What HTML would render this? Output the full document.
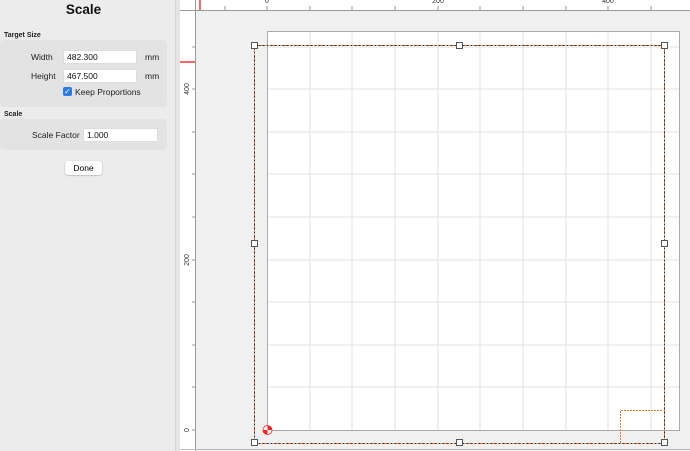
<!DOCTYPE html>
<html><head><style>
body{margin:0;width:690px;height:451px;overflow:hidden;background:#ececec;font-family:"Liberation Sans",sans-serif;position:relative}
.a{position:absolute}
.lbl{font-size:8.5px;color:#222}
.in{background:#fff;border:1px solid #ddd;font-size:8.5px;color:#111;box-sizing:border-box;padding:1px 3px;height:14px}
</style></head><body>
<div class="a" style="left:0;top:0;width:175px;height:451px;background:#ececec"></div>
<div class="a" style="left:0;top:2px;width:167px;text-align:center;font-weight:bold;font-size:13.5px;color:#111">Scale</div>
<div class="a" style="left:4px;top:32px;font-size:7px;font-weight:bold;color:#222">Target Size</div>
<div class="a" style="left:0;top:40px;width:167px;height:67px;background:#e3e3e3;border-radius:4px"></div>
<div class="a lbl" style="left:31px;top:52px">Width</div>
<div class="a in" style="left:63px;top:50px;width:74px">482.300</div>
<div class="a lbl" style="left:145px;top:52px">mm</div>
<div class="a lbl" style="left:31px;top:71px">Height</div>
<div class="a in" style="left:63px;top:69px;width:74px">467.500</div>
<div class="a lbl" style="left:145px;top:71px">mm</div>
<div class="a" style="left:63px;top:87px;width:9px;height:9px;background:#2c7be5;border-radius:2px;color:#fff;font-size:8px;line-height:9px;text-align:center">✓</div>
<div class="a lbl" style="left:75px;top:87px">Keep Proportions</div>
<div class="a" style="left:4px;top:111px;font-size:7px;font-weight:bold;color:#222">Scale</div>
<div class="a" style="left:0;top:119px;width:167px;height:31px;background:#e3e3e3;border-radius:4px"></div>
<div class="a lbl" style="left:32px;top:130px">Scale Factor</div>
<div class="a in" style="left:83px;top:128px;width:75px">1.000</div>
<div class="a" style="left:65px;top:161px;width:37px;height:14px;background:#fff;border-radius:3px;box-shadow:0 0.5px 1.5px rgba(0,0,0,.3);font-size:8.5px;text-align:center;line-height:14px">Done</div>
<div class="a" style="left:175px;top:0;width:4px;height:451px;background:#e4e4e4;border-left:1px solid #d6d6d6"></div>
<svg class="a" style="left:0;top:0" width="690" height="451">
<rect x="180" y="0" width="510" height="451" fill="#f0f0f0"/>
<rect x="180" y="0" width="510" height="10" fill="#fff"/>
<rect x="180" y="0" width="15" height="451" fill="#fff"/>
<line x1="180" y1="10.5" x2="690" y2="10.5" stroke="#999"/>
<line x1="195.5" y1="0" x2="195.5" y2="451" stroke="#999"/>
<line x1="200" y1="0" x2="200" y2="10" stroke="#f33" stroke-width="1.5"/>
<line x1="180" y1="62" x2="195" y2="62" stroke="#f33" stroke-width="1.5"/>
<g stroke="#999">
<line x1="225" y1="6" x2="225" y2="10"/><line x1="267" y1="6" x2="267" y2="10"/><line x1="310" y1="6" x2="310" y2="10"/><line x1="352" y1="6" x2="352" y2="10"/><line x1="395" y1="6" x2="395" y2="10"/><line x1="438" y1="6" x2="438" y2="10"/><line x1="480" y1="6" x2="480" y2="10"/><line x1="523" y1="6" x2="523" y2="10"/><line x1="566" y1="6" x2="566" y2="10"/><line x1="608" y1="6" x2="608" y2="10"/><line x1="651" y1="6" x2="651" y2="10"/>
<line x1="192" y1="47" x2="195" y2="47"/><line x1="192" y1="89" x2="195" y2="89"/><line x1="192" y1="132" x2="195" y2="132"/><line x1="192" y1="174" x2="195" y2="174"/><line x1="192" y1="217" x2="195" y2="217"/><line x1="192" y1="260" x2="195" y2="260"/><line x1="192" y1="302" x2="195" y2="302"/><line x1="192" y1="345" x2="195" y2="345"/><line x1="192" y1="387" x2="195" y2="387"/><line x1="192" y1="430" x2="195" y2="430"/>
</g>
<g font-size="7" fill="#333" font-family="Liberation Sans">
<text x="267" y="3" text-anchor="middle">0</text><text x="438" y="3" text-anchor="middle">200</text><text x="608" y="3" text-anchor="middle">400</text>
<text transform="translate(189,89) rotate(-90)" text-anchor="middle">400</text>
<text transform="translate(189,260) rotate(-90)" text-anchor="middle">200</text>
<text transform="translate(189,430) rotate(-90)" text-anchor="middle">0</text>
</g>
<rect x="267.5" y="31.5" width="412" height="399" fill="#fff" stroke="#aaa"/>
<g stroke="#e2e2e2">
<line x1="310" y1="32" x2="310" y2="430"/><line x1="352" y1="32" x2="352" y2="430"/><line x1="395" y1="32" x2="395" y2="430"/><line x1="438" y1="32" x2="438" y2="430"/><line x1="480" y1="32" x2="480" y2="430"/><line x1="523" y1="32" x2="523" y2="430"/><line x1="566" y1="32" x2="566" y2="430"/><line x1="608" y1="32" x2="608" y2="430"/><line x1="651" y1="32" x2="651" y2="430"/>
<line x1="268" y1="47" x2="679" y2="47"/><line x1="268" y1="89" x2="679" y2="89"/><line x1="268" y1="132" x2="679" y2="132"/><line x1="268" y1="174" x2="679" y2="174"/><line x1="268" y1="217" x2="679" y2="217"/><line x1="268" y1="260" x2="679" y2="260"/><line x1="268" y1="302" x2="679" y2="302"/><line x1="268" y1="345" x2="679" y2="345"/><line x1="268" y1="387" x2="679" y2="387"/>
</g>
<rect x="254.5" y="45.5" width="410" height="398" fill="none" stroke="#f07a20" stroke-dasharray="2,1"/>
<rect x="254.5" y="45.5" width="410" height="398" fill="none" stroke="#333" stroke-dasharray="2,2"/>
<path d="M620.5 443 V410.5 H663" fill="none" stroke="#f07a20" stroke-dasharray="2,1"/>
<g fill="#fff" stroke="#555">
<rect x="251.5" y="42.5" width="6" height="6"/><rect x="456.5" y="42.5" width="6" height="6"/><rect x="661.5" y="42.5" width="6" height="6"/>
<rect x="251.5" y="240.5" width="6" height="6"/><rect x="661.5" y="240.5" width="6" height="6"/>
<rect x="251.5" y="439.5" width="6" height="6"/><rect x="456.5" y="439.5" width="6" height="6"/><rect x="661.5" y="439.5" width="6" height="6"/>
</g>
<circle cx="267.5" cy="430" r="4.5" fill="#f22"/>
<path d="M267.5 430 L272 430 A4.5 4.5 0 0 1 267.5 434.5 Z" fill="#fff"/>
<path d="M267.5 430 L263 430 A4.5 4.5 0 0 1 267.5 425.5 Z" fill="#fff"/>
<circle cx="267.5" cy="430" r="4.5" fill="none" stroke="#f22" stroke-width="0.8"/>
<line x1="180" y1="449.5" x2="690" y2="449.5" stroke="#bbb"/>
</svg>
</body></html>
